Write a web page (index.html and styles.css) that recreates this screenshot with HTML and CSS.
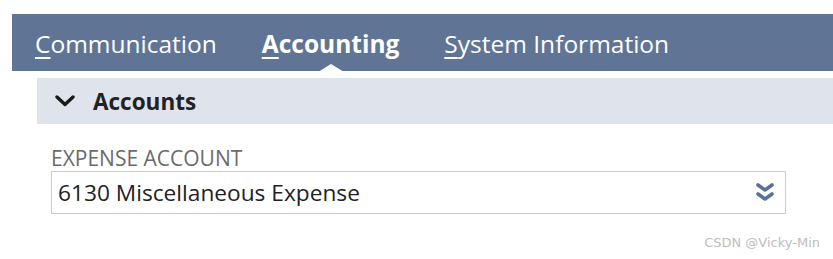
FILE: index.html
```html
<!DOCTYPE html>
<html lang="en">
<head>
  <meta charset="UTF-8">
  <title>Accounting</title>
  <link rel="stylesheet" href="styles.css">
</head>
<body>
  <div class="tabs">
    <a class="tab"><u>C</u>ommunication</a>
    <a class="tab active"><u>A</u>ccounting</a>
    <a class="tab"><u>S</u>ystem Information</a>
  </div>

  <div class="content">
    <div class="section-head">
      <svg class="chevron" width="20" height="12" viewBox="0 0 20 12">
        <path d="M2 2 L10 9.5 L18 2" fill="none" stroke="#1a1a1a" stroke-width="3.4" stroke-linecap="round" stroke-linejoin="round"/>
      </svg>
      <span>Accounts</span>
    </div>

    <div class="field">
      <label>EXPENSE ACCOUNT</label>
      <div class="select">
        <span>6130 Miscellaneous Expense</span>
        <svg class="dbl" width="20" height="22" viewBox="0 0 20 22">
          <path d="M3 3 L10 8 L17 3" fill="none" stroke="#5b7297" stroke-width="3.6" stroke-linecap="round" stroke-linejoin="round"/>
          <path d="M3 12 L10 17 L17 12" fill="none" stroke="#5b7297" stroke-width="3.6" stroke-linecap="round" stroke-linejoin="round"/>
        </svg>
      </div>
    </div>
  </div>

  <div class="mark">CSDN @Vicky-Min</div>
</body>
</html>
```

FILE: styles.css
```css
body {
  margin: 0;
  font-family: "Open Sans", Arial, sans-serif;
  background: #fff;
  width: 833px;
  height: 259px;
  overflow: hidden;
}

.tabs {
  margin: 14px 0 0 12px;
  height: 57px;
  background: #607596;
  display: flex;
  align-items: center;
  padding-left: 23px;
}

.tab {
  position: relative;
  color: #fff;
  font-size: 24.5px;
  margin-right: 45px;
  line-height: 57px;
  padding-top: 2px;
}

.tab u {
  text-decoration-thickness: 2px;
  text-underline-offset: 4px;
}

.tab.active {
  font-weight: bold;
}

.tab.active::after {
  content: "";
  position: absolute;
  left: 50%;
  bottom: 0;
  margin-left: -13px;
  border-left: 13px solid transparent;
  border-right: 13px solid transparent;
  border-bottom: 8px solid #fff;
}

.content {
  margin: 7px 0 0 37px;
}

.section-head {
  height: 46px;
  background: #dfe4ec;
  display: flex;
  align-items: center;
  padding-left: 18px;
  font-size: 22.5px;
  font-weight: bold;
  color: #222;
}

.chevron {
  margin-right: 18px;
}

.field {
  padding: 21px 0 0 14px;
  width: 735px;
}

.field label {
  display: block;
  font-size: 21px;
  color: #6b6b6b;
  line-height: 26px;
}

.select {
  height: 41px;
  border: 1px solid #cccccc;
  display: flex;
  align-items: center;
  justify-content: space-between;
  padding: 0 10px 0 6px;
  font-size: 22.7px;
  color: #222;
}

.mark {
  position: absolute;
  right: 13px;
  top: 235px;
  font-family: "DejaVu Sans", sans-serif;
  font-size: 13px;
  color: #bdbdbd;
}
```
